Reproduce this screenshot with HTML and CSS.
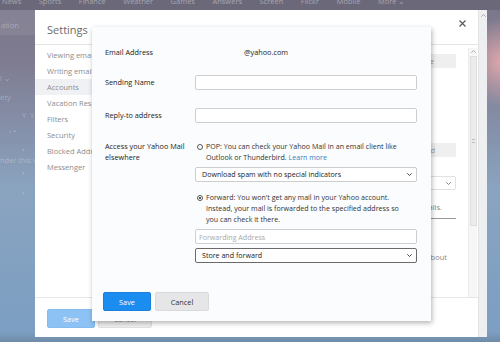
FILE: index.html
```html
<!DOCTYPE html>
<html lang="en">
<head>
    <meta charset="UTF-8">
    <meta name="viewport" content="width=device-width, initial-scale=1.0">
    <title>Settings - Accounts</title>
    <link rel="stylesheet" href="styles.css">
</head>
<body>
    <div class="topnav">
        <span>News</span>
        <span>Sports</span>
        <span>Finance</span>
        <span>Weather</span>
        <span>Games</span>
        <span>Answers</span>
        <span>Screen</span>
        <span>Flickr</span>
        <span>Mobile</span>
        <span>More &#8964;</span>
    </div>
    <div class="side">
        <div class="search">ation</div>
        <div class="side-item s1">l &#8964;</div>
        <div class="side-item s2">ety</div>
        <div class="side-item s3">Y &nbsp;Y</div>
        <div class="side-item s4">&rsaquo; &bull;</div>
        <div class="side-item s5">&bull;</div>
        <div class="side-item s6">nder this w</div>
        <div class="side-item s7">&bull;</div>
        <div class="side-item s8">&bull;</div>
    </div>

    <div class="settings">
        <div class="settings-main">
            <div class="settings-head">
                <h1>Settings</h1>
                <svg class="close" width="7" height="7" viewBox="0 0 7 7">
                    <path d="M0.5 0.5 L6.5 6.5 M6.5 0.5 L0.5 6.5" stroke="#555" stroke-width="1.1"/>
                </svg>
            </div>
            <div class="settings-body">
                <ul class="menu">
                    <li>Viewing email</li>
                    <li>Writing email</li>
                    <li class="active">Accounts</li>
                    <li>Vacation Response</li>
                    <li>Filters</li>
                    <li>Security</li>
                    <li>Blocked Addresses</li>
                    <li>Messenger</li>
                </ul>
                <div class="panel">
                    <div class="panel-btn b1">Delete</div>
                    <div class="panel-btn b2">Add</div>
                    <div class="panel-select">
                        <svg width="5" height="3" viewBox="0 0 5 3"><path d="M0.3 0.3 L2.5 2.5 L4.7 0.3" fill="none" stroke="#777" stroke-width="0.9"/></svg>
                    </div>
                    <div class="panel-note">for details.</div>
                    <div class="panel-line"></div>
                    <div class="panel-note n2">Learn about</div>
                </div>
                <div class="scroll-inner">
                    <svg class="arrow" width="5" height="3" viewBox="0 0 5 3"><path d="M0.3 2.7 L2.5 0.5 L4.7 2.7" fill="none" stroke="#999" stroke-width="0.8"/></svg>
                    <div class="thumb">
                        <span class="grip"></span>
                    </div>
                </div>
            </div>
            <div class="settings-foot">
                <button class="save faded">Save</button>
                <button class="cancel faded">Cancel</button>
            </div>
        </div>
        <div class="scroll-outer">
            <svg class="arrow" width="5" height="3" viewBox="0 0 5 3"><path d="M0.3 2.7 L2.5 0.5 L4.7 2.7" fill="none" stroke="#999" stroke-width="0.8"/></svg>
        </div>
    </div>

    <div class="dialog">
        <div class="row">
            <label>Email Address</label>
            <span class="email">@yahoo.com</span>
        </div>
        <div class="row r2">
            <label>Sending Name</label>
            <input type="text">
        </div>
        <div class="row r3">
            <label>Reply-to address</label>
            <input type="text">
        </div>
        <div class="row r4">
            <label>Access your Yahoo Mail<br>elsewhere</label>
            <div class="options">
                <div class="option">
                    <span class="radio"></span>
                    <p>POP: You can check your Yahoo Mail in an email client like<br>Outlook or Thunderbird. <a href="#">Learn more</a></p>
                </div>
                <div class="select">
                    <span>Download spam with no special indicators</span>
                    <svg width="5" height="3" viewBox="0 0 5 3"><path d="M0.3 0.3 L2.5 2.5 L4.7 0.3" fill="none" stroke="#333" stroke-width="0.9"/></svg>
                </div>
                <div class="option forward">
                    <span class="radio checked"></span>
                    <p>Forward: You won't get any mail in your Yahoo account.<br>Instead, your mail is forwarded to the specified address so<br>you can check it there.</p>
                </div>
                <input type="text" class="fwd" placeholder="Forwarding Address">
                <div class="select focus">
                    <span>Store and forward</span>
                    <svg width="5" height="3" viewBox="0 0 5 3"><path d="M0.3 0.3 L2.5 2.5 L4.7 0.3" fill="none" stroke="#333" stroke-width="0.9"/></svg>
                </div>
            </div>
        </div>
        <div class="actions">
            <button class="save">Save</button>
            <button class="cancel">Cancel</button>
        </div>
    </div>
</body>
</html>
```

FILE: styles.css
```css
* {
    box-sizing: border-box;
}
body {
    margin: 0;
    width: 500px;
    height: 342px;
    overflow: hidden;
    position: relative;
    font-family: "Open Sans", "Noto Sans", sans-serif;
    background:
        radial-gradient(ellipse 40px 45px at 502px 62px, #e0a8ac, rgba(224,168,172,0)),
        linear-gradient(180deg, #7a778b 0%, #7f7c91 18%, #8aa3bf 55%, #7c9fc3 97%, #6f8ba6 100%);
}
.topnav {
    height: 10px;
    background: #6b6979;
    display: flex;
    gap: 17.5px;
    padding-left: 2px;
    overflow: hidden;
    font-size: 7.5px;
    line-height: 9px;
    color: rgba(255,255,255,0.4);
}
.topnav span {
    margin-top: -3px;
    white-space: nowrap;
}
.side {
    width: 35px;
    font-size: 7.5px;
    color: rgba(255,255,255,0.3);
    white-space: nowrap;
}
.search {
    height: 25px;
    background: rgba(255,255,255,0.08);
    padding: 10px 0 0 1px;
}
.side-item { line-height: 10px; }
.s1 { margin-top: 38px; }
.s2 { margin-top: 9px; }
.s3 { margin-top: 8px; padding-left: 22px; }
.s4 { margin-top: 6px; padding-left: 9px; }
.s5 { margin-top: 9px; padding-left: 22px; }
.s6 { margin-top: 0; }
.s7 { margin-top: 3px; padding-left: 22px; }
.s8 { margin-top: 10px; padding-left: 22px; }

/* settings window */
.settings {
    position: absolute;
    left: 35px;
    top: 10px;
    width: 452px;
    height: 327px;
    background: #fff;
    display: flex;
}
.settings-main {
    width: 443px;
    display: flex;
    flex-direction: column;
}
.settings-head {
    height: 35px;
    border-bottom: 1px solid #e4e4e4;
    display: flex;
    justify-content: space-between;
    padding: 0 12px;
}
.settings-head h1 {
    margin: 14px 0 0;
    font-size: 11px;
    line-height: 12px;
    font-weight: 400;
    color: #6b6b6b;
}
.close {
    margin-top: 10px;
}
.settings-body {
    height: 252px;
    display: flex;
}
.menu {
    list-style: none;
    margin: 0;
    padding: 2px 0 0;
    width: 57px;
    overflow: hidden;
}
.menu li {
    height: 16px;
    line-height: 16px;
    padding-left: 12px;
    font-size: 7.5px;
    color: #8d8d8d;
    white-space: nowrap;
}
.menu li.active {
    background: #f0f1f4;
}
.panel {
    flex: 1;
    display: flex;
    flex-direction: column;
    align-items: flex-end;
    padding-right: 12px;
    font-size: 7.5px;
    color: #888;
}
.panel-btn {
    width: 100px;
    height: 14px;
    background: #efefef;
    border-radius: 1px;
    line-height: 14px;
    text-align: right;
    color: #999;
}
.b1 { margin-top: 9px; padding-right: 22px; }
.b2 { margin-top: 75px; padding-right: 21px; }
.panel-select {
    margin-top: 19px;
    width: 100px;
    height: 14px;
    border: 1px solid #e2e2e2;
    border-radius: 2px;
    display: flex;
    align-items: center;
    justify-content: flex-end;
    padding-right: 4px;
}
.panel-note {
    margin-top: 12px;
    line-height: 11px;
    margin-right: 14px;
}
.n2 {
    margin-top: 33px;
    margin-right: 9px;
}
.panel-line {
    margin-top: 5px;
    width: 100px;
    border-top: 1px solid #9a9a9a;
}
.scroll-inner {
    width: 9px;
    margin-top: 3px;
    margin-right: 1px;
    background: #f6f6f6;
    border-left: 1px solid #ececec;
    display: flex;
    flex-direction: column;
    align-items: center;
}
.scroll-inner .arrow {
    margin-top: 2px;
}
.thumb {
    margin-top: 3px;
    width: 7px;
    height: 170px;
    background: #ececec;
    border: 1px solid #dedede;
    display: flex;
    justify-content: center;
    padding-top: 82px;
}
.grip {
    width: 3px;
    height: 4px;
    border-top: 1px solid #bbb;
    border-bottom: 1px solid #bbb;
}
.scroll-outer {
    width: 9px;
    background: #eeeff1;
    border-left: 1px solid #e2e2e2;
    display: flex;
    justify-content: center;
}
.scroll-outer .arrow {
    margin-top: 4px;
}
.settings-foot {
    flex: 1;
    border-top: 1px solid #e6e6e6;
    padding: 11px 12px 0;
    display: flex;
    gap: 3px;
    align-items: flex-start;
}

/* buttons */
button {
    font-family: inherit;
    font-size: 7.3px;
    height: 19px;
    border-radius: 2px;
    padding: 0;
    cursor: pointer;
}
.save {
    width: 48px;
    background: #1b8df1;
    border: 1px solid #1a80dc;
    color: #fff;
}
.cancel {
    width: 54px;
    background: #e6e6e8;
    border: 1px solid #d9d9dc;
    color: #333;
}
.save.faded {
    background: #8cc2f4;
    border-color: #86bbee;
}
.cancel.faded {
    background: #efefef;
    border-color: #e2e2e2;
    color: #888;
}

/* account dialog */
.dialog {
    position: absolute;
    left: 92px;
    top: 27px;
    width: 339px;
    height: 294px;
    background: #fbfcfd;
    padding: 20px 14px 0 13px;
    box-shadow: 1px 2px 5px rgba(0,0,0,0.3);
    font-size: 7.1px;
    line-height: 11px;
    color: #2b2b2b;
}
.row {
    display: grid;
    grid-template-columns: 90px 1fr;
    align-items: center;
}
.r2 { margin-top: 17px; }
.r3 { margin-top: 18px; }
.r4 {
    margin-top: 18px;
    align-items: start;
}
.row label {
    font-size: 7.3px;
    color: #222;
}
.email {
    padding-left: 49px;
    font-size: 7.3px;
    color: #222;
}
input {
    display: block;
    width: 100%;
    height: 15px;
    margin: 0;
    border: 1px solid #cfcfcf;
    border-radius: 2px;
    background: #fff;
    font-family: inherit;
    font-size: 7.1px;
    padding: 0 3px;
}
input::placeholder {
    color: #a9a9a9;
}
.option {
    display: flex;
    gap: 3px;
    padding-left: 2px;
}
.option p {
    margin: 0;
    color: #333;
}
.option a {
    color: #2f82c3;
    text-decoration: none;
}
.radio {
    flex: none;
    width: 6px;
    height: 6px;
    margin-top: 2.5px;
    border: 1px solid #555;
    border-radius: 50%;
    background: #fff;
    display: flex;
    align-items: center;
    justify-content: center;
}
.radio.checked::after {
    content: "";
    width: 2px;
    height: 2px;
    border-radius: 50%;
    background: #222;
}
.select {
    margin-top: 4px;
    height: 15px;
    border: 1px solid #cdcdcd;
    border-radius: 2px;
    background: #fff;
    display: flex;
    align-items: center;
    justify-content: space-between;
    padding: 0 4px 0 6px;
    color: #222;
}
.select.focus {
    border-color: #6a6a6a;
}
.forward {
    margin-top: 10px;
}
.fwd {
    margin-top: 4px;
}
.actions {
    margin: 29px 0 0 -2px;
    display: flex;
    gap: 4px;
}
```
